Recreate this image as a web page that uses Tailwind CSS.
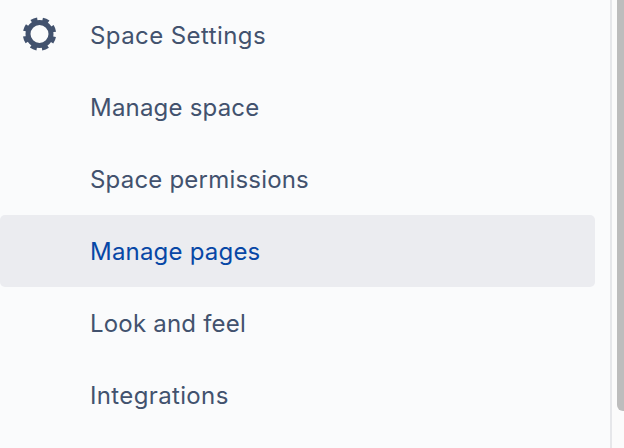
<!DOCTYPE html>
<html lang="en">
<head>
    <meta charset="UTF-8">
    <title>Space Settings</title>
    <script src="https://cdn.jsdelivr.net/npm/@tailwindcss/browser@4"></script>
</head>
<body class="bg-white overflow-hidden">
    <div class="flex h-[448px] w-[624px] font-['Inter',sans-serif] text-[24px] tracking-[0.2px] text-[#42526e]">
        <nav class="w-[610px] h-full bg-[#fafbfc] pr-[15px] flex flex-col">
            <div class="h-[72px] -mt-[1px] pt-[2px] flex items-center">
                <div class="w-[78px] pl-[20px] pr-[20px] shrink-0 flex">
                    <svg class="w-[38px] h-[38px] -mt-[2px]" viewBox="0 0 38 38" fill="none" stroke="#42526e">
                        <circle cx="19.5" cy="18" r="11.5" stroke-width="5"/>
                        <circle cx="19.5" cy="18" r="14.6" stroke-width="4.2" stroke-dasharray="6.2 5.27" stroke-dashoffset="-2.63"/>
                    </svg>
                </div>
                <span class="pl-[12px] tracking-[0.42px]">Space Settings</span>
            </div>
            <a class="h-[72px] pt-[2px] flex items-center pl-[90px]">Manage space</a>
            <a class="h-[72px] pt-[2px] flex items-center pl-[90px]">Space permissions</a>
            <a class="h-[72px] pt-[2px] flex items-center pl-[90px] rounded-[5px] bg-[#ebecf0] text-[#0747a6]">Manage pages</a>
            <a class="h-[72px] pt-[2px] flex items-center pl-[90px]">Look and feel</a>
            <a class="h-[72px] pt-[2px] flex items-center pl-[90px] tracking-[0.36px]">Integrations</a>
        </nav>
        <div class="w-[2px] h-full bg-[#e6e7ea]"></div>
        <div class="flex-1 h-full bg-[#fbfbfb] pl-[5px]">
            <div class="h-[411px] bg-[#bdbdbd] rounded-bl-[6px]"></div>
        </div>
    </div>
</body>
</html>
